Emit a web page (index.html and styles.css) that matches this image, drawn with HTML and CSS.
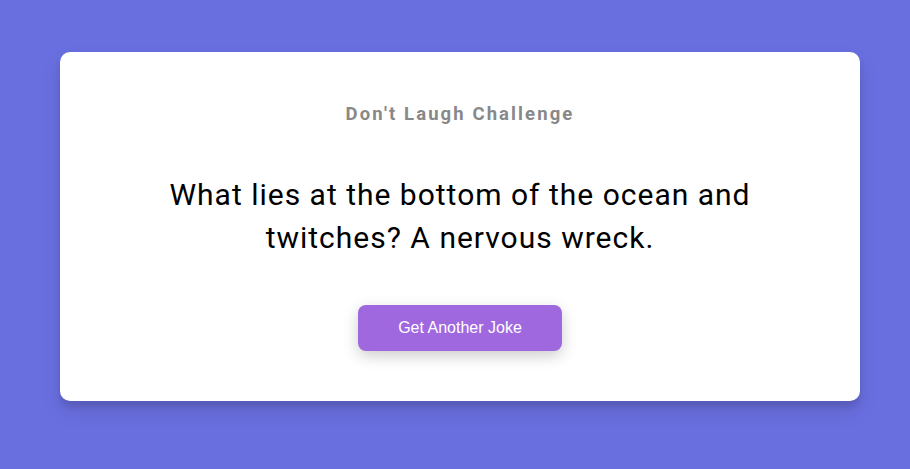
FILE: index.html
```html
<!DOCTYPE html>
<html>
<head>
<meta charset="utf-8">
<link rel="stylesheet" href="styles.css">
</head>
<body>
<div class="page">
  <div class="card">
    <h3 class="title">Don't Laugh Challenge</h3>
    <p class="joke">What lies at the bottom of the ocean and twitches? A nervous wreck.</p>
    <button class="btn">Get Another Joke</button>
  </div>
</div>
</body>
</html>
```
FILE: styles.css
```css
html, body {
  margin: 0;
  padding: 0;
}
body {
  background: #6a6fe0;
  font-family: Roboto, "Liberation Sans", sans-serif;
  height: 469px;
  overflow: hidden;
}
.page {
  padding: 52px 50px 0 60px;
}
.card {
  width: 800px;
  box-sizing: border-box;
  background: #fff;
  border-radius: 10px;
  padding: 52px 90px 50px;
  text-align: center;
  box-shadow: 0 10px 20px rgba(0, 0, 0, 0.1), 0 6px 6px rgba(0, 0, 0, 0.1);
}
.title {
  margin: 0 0 48px;
  font-size: 18.5px;
  font-weight: 700;
  letter-spacing: 2.1px;
  color: #888;
  line-height: 21px;
}
.joke {
  margin: 0 0 46px;
  font-size: 30px;
  line-height: 43px;
  letter-spacing: 1px;
  color: #000;
}
.btn {
  font-family: "Liberation Sans", Arial, sans-serif;
  font-size: 16px;
  color: #fff;
  background: #9f68de;
  border: none;
  border-radius: 8px;
  padding: 14px 40px;
  line-height: 18px;
  box-shadow: 0 5px 15px rgba(0, 0, 0, 0.2);
  cursor: pointer;
}
```
